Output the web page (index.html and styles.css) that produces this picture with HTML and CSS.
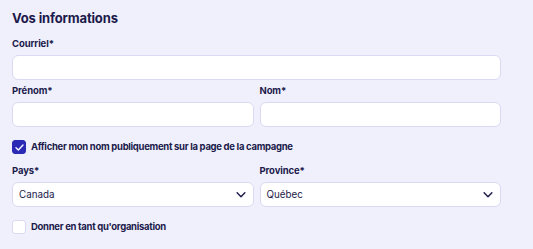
FILE: index.html
```html
<!DOCTYPE html>
<html lang="fr">
<head>
<meta charset="utf-8">
<link rel="stylesheet" href="styles.css">
</head>
<body>
<form class="form">
  <h2 class="title">Vos informations</h2>
  <div class="field">
    <label class="label">Courriel*</label>
    <input class="input" type="text">
  </div>
  <div class="row">
    <div class="field">
      <label class="label">Prénom*</label>
      <input class="input" type="text">
    </div>
    <div class="field">
      <label class="label">Nom*</label>
      <input class="input" type="text">
    </div>
  </div>
  <label class="check">
    <span class="box checked">
      <svg width="9" height="7" viewBox="0 0 10 8"><path d="M1 4.2 L3.7 6.8 L9 1.2" fill="none" stroke="#fff" stroke-width="1.5" stroke-linecap="round" stroke-linejoin="round"/></svg>
    </span>
    <span class="check-text">Afficher mon nom publiquement sur la page de la campagne</span>
  </label>
  <div class="row row-loc">
    <div class="field">
      <label class="label">Pays*</label>
      <div class="select"><span>Canada</span>
        <svg class="chev" width="10" height="6" viewBox="0 0 11 7"><path d="M1 1 L5.5 5.5 L10 1" fill="none" stroke="#1d1b4c" stroke-width="1.7" stroke-linecap="round" stroke-linejoin="round"/></svg>
      </div>
    </div>
    <div class="field">
      <label class="label">Province*</label>
      <div class="select"><span>Québec</span>
        <svg class="chev" width="10" height="6" viewBox="0 0 11 7"><path d="M1 1 L5.5 5.5 L10 1" fill="none" stroke="#1d1b4c" stroke-width="1.7" stroke-linecap="round" stroke-linejoin="round"/></svg>
      </div>
    </div>
  </div>
  <label class="check">
    <span class="box"></span>
    <span class="check-text">Donner en tant qu'organisation</span>
  </label>
</form>
</body>
</html>
```
FILE: styles.css
```css
html, body {
  margin: 0;
  padding: 0;
  background: #f0f0fc;
}
body {
  font-family: Inter, "Noto Sans", sans-serif;
  color: #1b1a4b;
}
.form {
  width: 489px;
  padding: 8px 12px;
  display: flex;
  flex-direction: column;
}
.title {
  margin: 0;
  font-size: 13px;
  line-height: 20px;
  font-weight: 700;
  letter-spacing: -0.15px;
}
.field {
  display: flex;
  flex-direction: column;
  gap: 4px;
  flex: 1;
}
.form > .field { margin-top: 9px; }
.row {
  display: flex;
  gap: 6px;
  margin-top: 4px;
}
.row-loc { margin-top: 10px; }
.label {
  font-size: 9.5px;
  line-height: 14px;
  font-weight: 700;
  letter-spacing: -0.1px;
}
.input, .select {
  box-sizing: border-box;
  height: 25px;
  border: 1px solid #d9d9f4;
  border-radius: 6px;
  background: #fff;
  width: 100%;
  margin: 0;
}
.select {
  display: flex;
  align-items: center;
  justify-content: space-between;
  padding: 0 7px 0 6px;
  font-size: 9.8px;
}
.chev { display: block; }
.check {
  display: flex;
  align-items: center;
  gap: 5px;
  margin-top: 13px;
}
.box {
  box-sizing: border-box;
  width: 14px;
  height: 14px;
  border-radius: 3px;
  border: 1px solid #d9d9f4;
  background: #fff;
  display: flex;
  align-items: center;
  justify-content: center;
}
.box.checked {
  background: #2a2ab5;
  border-color: #2a2ab5;
}
.check-text {
  font-size: 9.5px;
  line-height: 14px;
  font-weight: 700;
  letter-spacing: -0.3px;
}
```
